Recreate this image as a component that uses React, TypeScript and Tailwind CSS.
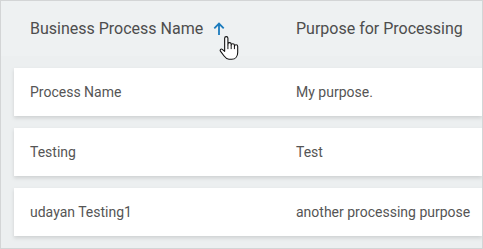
import React from "react";

const rows = [
  ["Process Name", "My purpose."],
  ["Testing", "Test"],
  ["udayan Testing1", "another processing purpose"],
];

function Hand() {
  return (
    <svg width="22" height="25" viewBox="0 0 19 23" className="absolute left-[217px] top-[34px]">
      <path
        d="M5.5 3 a1.5 1.5 0 0 1 3 0 V9 V8.5 a1.5 1.5 0 0 1 3 0 V9.5 a1.5 1.5 0 0 1 3 0 V10.5 a1.5 1.5 0 0 1 3 0 V16 c0 3.5 -2 6.3 -5.5 6.3 H9.5 c-2 0 -3 -1 -4.5 -3 L1.6 14.8 c-0.8 -1.1 0.6 -2.4 1.7 -1.6 L5.5 15 Z"
        fill="#fff"
        stroke="#111"
        strokeWidth="1"
        strokeLinejoin="round"
      />
      <path d="M8.5 9 V13 M11.5 9.5 V13 M14.5 10.5 V13" stroke="#111" strokeWidth="0.9" fill="none" />
    </svg>
  );
}

export default function App() {
  return (
    <div
      className="relative w-[483px] h-[249px] border border-[#d3d5d6] bg-[#eceff0] overflow-hidden"
      style={{ fontFamily: "Roboto, 'Liberation Sans', sans-serif" }}
    >
      <div className="flex items-center h-[55px] pl-[29px] bg-[#eef1f2] text-[16px] text-[#4d4d4d]">
        <div className="w-[266px] flex items-center">
          <span>Business Process Name</span>
          <svg width="12" height="14" viewBox="0 0 12 14" className="ml-[10px] mt-[1px]">
            <path d="M6 13 V1.8 M1.3 6.3 L6 1.6 L10.7 6.3" stroke="#1b7bbd" strokeWidth="1.8" fill="none" />
          </svg>
        </div>
        <span>Purpose for Processing</span>
      </div>
      <Hand />
      <div className="flex flex-col gap-[12px] pt-[12px] pl-[13px]">
        {rows.map(([a, b]) => (
          <div
            key={a}
            className="flex items-center h-[48px] pl-[16px] bg-white text-[14px] text-[#555] shadow-[0_2px_4px_rgba(0,0,0,0.13)]"
          >
            <div className="w-[266px]">{a}</div>
            <div>{b}</div>
          </div>
        ))}
      </div>
    </div>
  );
}
